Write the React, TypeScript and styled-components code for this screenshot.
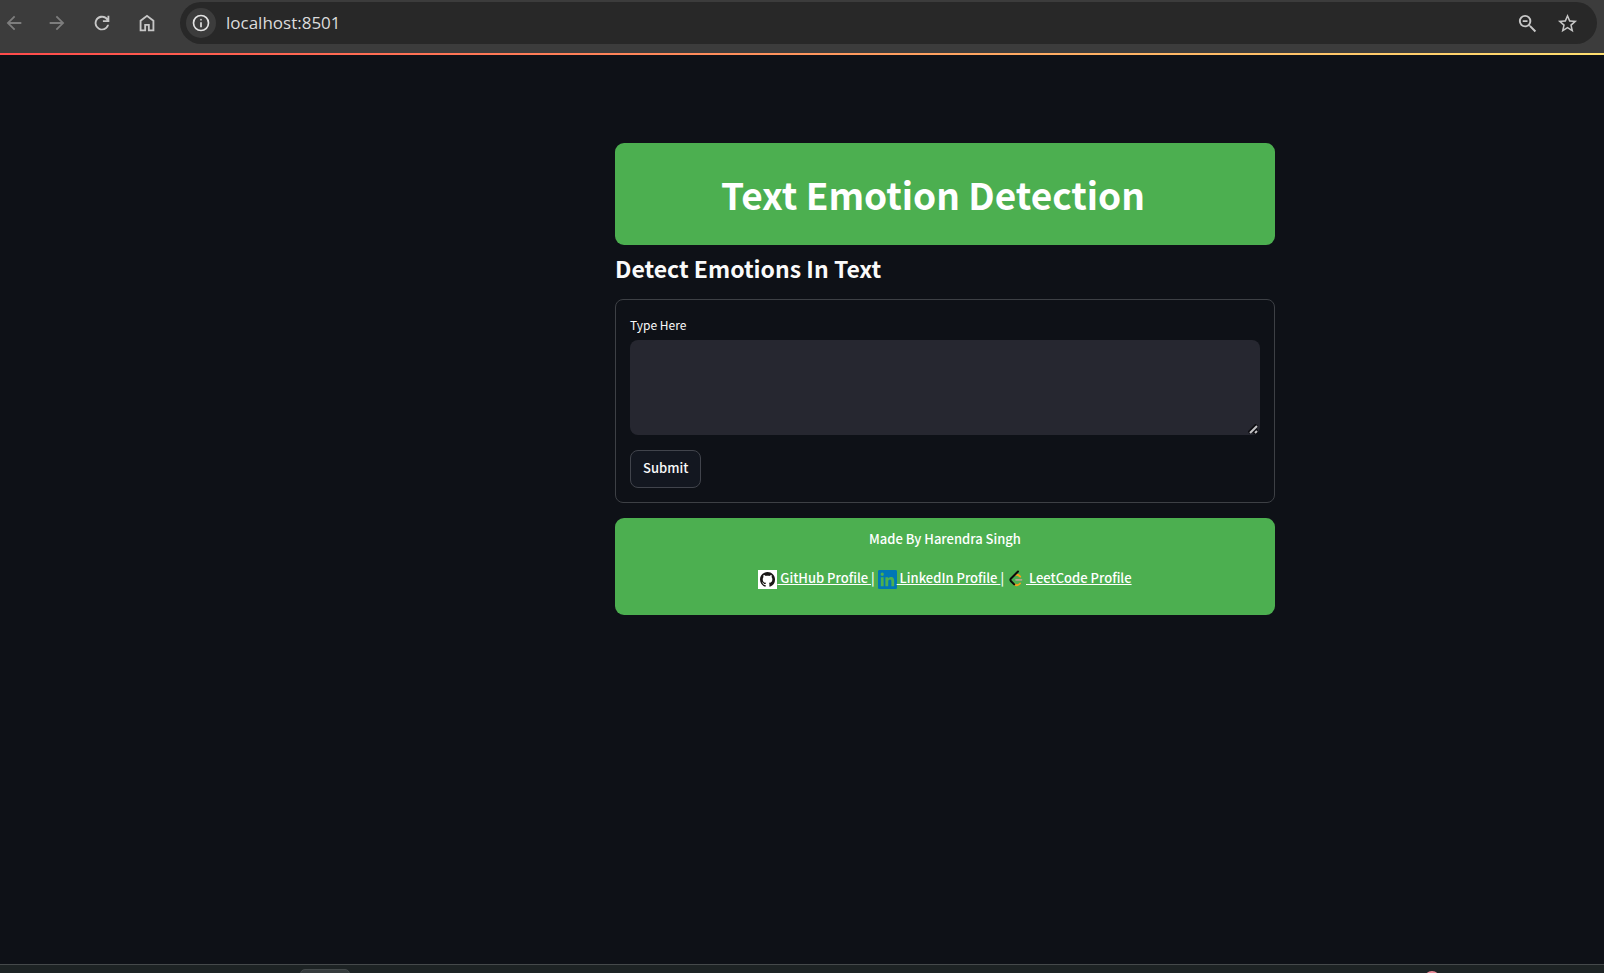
import React from "react";
import styled, { createGlobalStyle } from "styled-components";

const GlobalStyle = createGlobalStyle`
  *, *::before, *::after { box-sizing: border-box; }
  body { margin: 0; background: #0e1117; }
`;

const sans = `"Noto Sans CJK SC", "Open Sans", sans-serif`;

const Screen = styled.div`
  display: flex;
  flex-direction: column;
  height: 100vh;
  overflow: hidden;
  font-family: ${sans};
  color: #fafafa;
`;

const BrowserBar = styled.header`
  display: flex;
  align-items: center;
  gap: 18px;
  height: 53px;
  flex: none;
  padding: 0 7px 7px 0;
  background: #3c3c3c;
`;

const NavButtons = styled.nav`
  display: flex;
  align-items: center;
  gap: 15px;
`;

const IconButton = styled.button<{ $dim?: boolean; $size?: number }>`
  display: grid;
  place-items: center;
  width: ${(p) => p.$size ?? 30}px;
  height: ${(p) => p.$size ?? 30}px;
  padding: 0;
  border: 0;
  border-radius: 50%;
  background: none;
  color: ${(p) => (p.$dim ? "#7d7d7d" : "#c7c7c7")};
`;

const SiteInfo = styled(IconButton)`
  background: #3c3c3c;
  color: #e3e3e3;
`;

const AddressBar = styled.div`
  display: flex;
  align-items: center;
  flex: 1;
  height: 42px;
  padding: 0 15px 0 6px;
  border-radius: 21px;
  background: #282828;
`;

const Address = styled.input`
  flex: 1;
  min-width: 0;
  padding: 0 0 0 10px;
  border: 0;
  outline: 0;
  background: none;
  color: #dcdcdc;
  font: 17px/24px "Open Sans", sans-serif;
`;

const AddressActions = styled.div`
  display: flex;
  gap: 10px;
`;

const Decoration = styled.div`
  height: 2px;
  flex: none;
  background: linear-gradient(90deg, #ff4b4b, #ffe070);
`;

const Main = styled.main`
  flex: 1;
  min-height: 0;
  padding: 88px 0 0 286px;
`;

const Block = styled.div`
  display: flex;
  flex-direction: column;
  width: 100%;
  max-width: 660px;
  margin: 0 auto;
`;

const Banner = styled.section`
  padding: 24px 24px 24px 0;
  border-radius: 9px;
  background: #4caf50;
  text-align: center;
`;

const Title = styled.h1`
  margin: 0;
  color: #fff;
  font-size: 37px;
  line-height: 54px;
  font-weight: 700;
`;

const Subtitle = styled.h2`
  margin: 7px 0 15px;
  font-size: 23px;
  line-height: 32px;
  font-weight: 700;
`;

const Form = styled.form`
  display: flex;
  flex-direction: column;
  align-items: flex-start;
  padding: 14px;
  border: 1px solid #3d4045;
  border-radius: 8px;
`;

const Label = styled.label`
  margin-bottom: 4px;
  font-size: 12px;
  line-height: 22px;
`;

const TextAreaBox = styled.div`
  position: relative;
  width: 100%;
  margin-bottom: 15px;
`;

const TextArea = styled.textarea`
  display: block;
  width: 100%;
  height: 95px;
  padding: 12px;
  border: 0;
  border-radius: 8px;
  outline: 0;
  resize: none;
  background: #262730;
  color: #fafafa;
  font: 13px/20px ${sans};
`;

const Grip = styled.svg`
  position: absolute;
  right: 2px;
  bottom: 1px;
  pointer-events: none;
`;

const Submit = styled.button`
  height: 38px;
  padding: 0 12px 2px;
  border: 1px solid #41444c;
  border-radius: 8px;
  background: #131720;
  color: #fafafa;
  font: 500 13px/22px ${sans};
`;

const Footer = styled.footer`
  margin-top: 15px;
  padding: 9px 9px 25px;
  border-radius: 9px;
  background: #4caf50;
  color: #fff;
  text-align: center;
  font-size: 13px;
  line-height: 24px;
  font-weight: 500;
`;

const Credit = styled.p`
  margin: 0 0 15px;
`;

const Links = styled.p`
  margin: 0;
`;

const ProfileLink = styled.a`
  color: #fff;
  text-decoration: underline;
  text-underline-offset: 1px;
  svg { vertical-align: middle; }
`;

const Taskbar = styled.div`
  display: flex;
  justify-content: space-between;
  height: 9px;
  flex: none;
  padding: 4px 164px 0 300px;
  border-top: 1px solid #45494b;
  background: #1d2324;
  overflow: hidden;
`;

const ActiveApp = styled.div`
  width: 50px;
  height: 40px;
  border: 1px solid #43494a;
  border-radius: 5px;
  background: #353b3c;
`;

const Badge = styled.div`
  width: 16px;
  height: 16px;
  margin-top: 2px;
  border-radius: 50%;
  background: #e88a98;
`;

const Glyph = ({ d, size = 24 }: { d: string; size?: number }) => (
  <svg width={size} height={size} viewBox="0 0 24 24" fill="currentColor" aria-hidden="true">
    <path d={d} />
  </svg>
);

const BACK = "M20 11H7.83l5.59-5.59L12 4l-8 8 8 8 1.41-1.41L7.83 13H20z";
const FORWARD = "M4 11h12.17l-5.59-5.59L12 4l8 8-8 8-1.41-1.41L16.17 13H4z";
const RELOAD =
  "M12 20a8 8 0 1 1 5.7-13.6L18 6.7V4h2v7h-7V9h4.1A6 6 0 1 0 17.7 14h2A8 8 0 0 1 12 20z";
const HOME = "M6 19h3v-6h6v6h3v-9l-6-4.5L6 10v9zm-2 2V9l8-6 8 6v12h-7v-6h-2v6H4z";
const INFO =
  "M11 17h2v-6h-2v6zm1-8a1 1 0 1 0 0-2 1 1 0 0 0 0 2zm0 13a10 10 0 1 1 0-20 10 10 0 0 1 0 20zm0-2a8 8 0 1 0 0-16 8 8 0 0 0 0 16z";
const ZOOM_OUT =
  "M15.5 14h-.79l-.28-.27A6.47 6.47 0 0 0 16 9.5 6.5 6.5 0 1 0 9.5 16c1.61 0 3.09-.59 4.23-1.57l.27.28v.79l5.5 5.5L21 19.5zm-6 0a4.5 4.5 0 1 1 0-9 4.5 4.5 0 0 1 0 9zM7 8.6h5v1.8H7z";
const STAR =
  "M22 9.24l-7.19-.62L12 2 9.19 8.63 2 9.24l5.46 4.73L5.82 21 12 17.27 18.18 21l-1.63-7.03zM12 15.4l-3.76 2.27 1-4.28-3.32-2.88 4.38-.38L12 6.1l1.71 4.04 4.38.38-3.32 2.88 1 4.28z";

const GitHubLogo = () => (
  <svg width="19" height="19" viewBox="0 0 19 19" aria-hidden="true">
    <path fill="#fff" d="M0 0h19v19H0z" />
    <path
      fill="#1b1817"
      transform="translate(2 2) scale(.94)"
      d="M8 0C3.58 0 0 3.58 0 8c0 3.54 2.29 6.53 5.47 7.59.4.07.55-.17.55-.38 0-.19-.01-.82-.01-1.49-2.01.37-2.53-.49-2.69-.94-.09-.23-.48-.94-.82-1.13-.28-.15-.68-.52-.01-.53.63-.01 1.08.58 1.23.82.72 1.21 1.87.87 2.33.66.07-.52.28-.87.51-1.07-1.78-.2-3.64-.89-3.64-3.95 0-.87.31-1.59.82-2.15-.08-.2-.36-1.02.08-2.12 0 0 .67-.21 2.2.82.64-.18 1.32-.27 2-.27s1.36.09 2 .27c1.53-1.04 2.2-.82 2.2-.82.44 1.1.16 1.92.08 2.12.51.56.82 1.27.82 2.15 0 3.07-1.87 3.75-3.65 3.95.29.25.54.73.54 1.48 0 1.07-.01 1.93-.01 2.2 0 .21.15.46.55.38A8.01 8.01 0 0 0 16 8c0-4.42-3.58-8-8-8z"
    />
  </svg>
);

const LinkedInLogo = () => (
  <svg width="19" height="19" viewBox="0 0 24 24" aria-hidden="true">
    <path
      fill="#0077b5"
      d="M20.447 20.452h-3.554v-5.569c0-1.328-.027-3.037-1.852-3.037-1.853 0-2.136 1.445-2.136 2.939v5.667H9.351V9h3.414v1.561h.046c.477-.9 1.637-1.85 3.37-1.85 3.601 0 4.267 2.37 4.267 5.455v6.286zM5.337 7.433a2.062 2.062 0 1 1 0-4.124 2.062 2.062 0 0 1 0 4.124zM7.119 20.452H3.555V9h3.564v11.452zM22.225 0H1.771C.792 0 0 .774 0 1.729v20.542C0 23.227.792 24 1.771 24h20.451C23.2 24 24 23.227 24 22.271V1.729C24 .774 23.2 0 22.222 0z"
    />
  </svg>
);

const LeetCodeLogo = () => (
  <svg width="19" height="19" viewBox="0 0 19 19" fill="none" strokeLinecap="round" aria-hidden="true">
    <path stroke="#f89f1b" strokeWidth="1.8" d="M9 5c1.400-.7 2.700 0 4.200 1.700M7.500 14.300c1.800 1.500 3.800 1.200 5.600-.8" />
    <path stroke="#b3a58c" strokeWidth="1.700" d="M9 9.800h5.500" />
    <path stroke="#0b0b0b" strokeWidth="2" d="M11 1.500L4 8.500c-.9.9-.9 1.800 0 2.700l3.200 3.200" />
  </svg>
);

export default function App() {
  return (
    <Screen>
      <GlobalStyle />
      <BrowserBar>
        <NavButtons aria-label="Browser">
          <IconButton type="button" aria-label="Back" $dim $size={27}><Glyph d={BACK} size={22} /></IconButton>
          <IconButton type="button" aria-label="Forward" $dim><Glyph d={FORWARD} size={22} /></IconButton>
          <IconButton type="button" aria-label="Reload"><Glyph d={RELOAD} size={22} /></IconButton>
          <IconButton type="button" aria-label="Home"><Glyph d={HOME} size={22} /></IconButton>
        </NavButtons>
        <AddressBar>
          <SiteInfo type="button" aria-label="Site information"><Glyph d={INFO} size={20} /></SiteInfo>
          <Address aria-label="Address" defaultValue="localhost:8501" />
          <AddressActions>
            <IconButton type="button" aria-label="Zoom"><Glyph d={ZOOM_OUT} size={23} /></IconButton>
            <IconButton type="button" aria-label="Bookmark"><Glyph d={STAR} size={23} /></IconButton>
          </AddressActions>
        </AddressBar>
      </BrowserBar>
      <Decoration />
      <Main>
        <Block>
          <Banner>
            <Title>Text Emotion Detection</Title>
          </Banner>
          <Subtitle>Detect Emotions In Text</Subtitle>
          <Form onSubmit={(e) => e.preventDefault()}>
            <Label htmlFor="message">Type Here</Label>
            <TextAreaBox>
              <TextArea id="message" />
              <Grip width="10" height="10" viewBox="0 0 10 10" fill="none" aria-hidden="true">
                <path stroke="#0c0c10" strokeWidth="4" d="M1 9L9 1M6 10l4-4" />
                <path stroke="#c4c4c6" strokeWidth="2" d="M2 9l7-7M7 9l2-2" />
              </Grip>
            </TextAreaBox>
            <Submit type="submit">Submit</Submit>
          </Form>
          <Footer>
            <Credit>Made By Harendra Singh</Credit>
            <Links>
              <ProfileLink href="#github"><GitHubLogo /> GitHub Profile </ProfileLink>|{" "}
              <ProfileLink href="#linkedin"><LinkedInLogo /> LinkedIn Profile </ProfileLink>|{" "}
              <ProfileLink href="#leetcode"><LeetCodeLogo /> LeetCode Profile</ProfileLink>
            </Links>
          </Footer>
        </Block>
      </Main>
      <Taskbar>
        <ActiveApp />
        <Badge />
      </Taskbar>
    </Screen>
  );
}
